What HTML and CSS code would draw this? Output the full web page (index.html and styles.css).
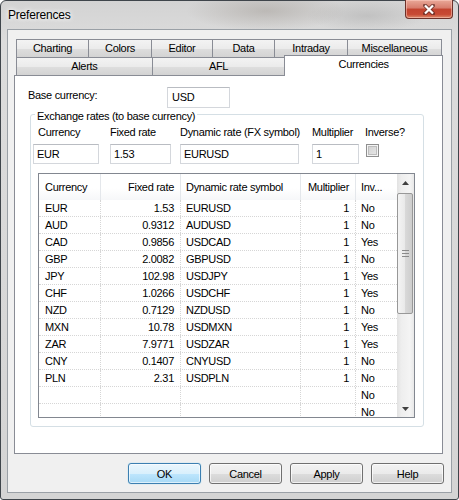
FILE: index.html
```html
<!DOCTYPE html>
<html lang="en">
  <head>
    <meta charset="UTF-8" />
    <title>Preferences</title>
    <link rel="stylesheet" href="styles.css">
  </head>
  <body>
    <div class="window">
      <div class="titlebar">
        <span class="title">Preferences</span>
        <span class="close-button">
          <svg width="12" height="11" viewBox="0 0 12 11">
            <path d="M2 1.5 L10 9.5 M10 1.5 L2 9.5" stroke="#5a2a24" stroke-width="4" stroke-linecap="square" fill="none" opacity="0.7"/>
            <path d="M2 1.5 L10 9.5 M10 1.5 L2 9.5" stroke="#ffffff" stroke-width="2.2" fill="none"/>
          </svg>
        </span>
      </div>

      <div class="client">
        <div class="tabs">
          <div class="tab-row">
            <span class="tab tab-first" style="width: 73px">Charting</span>
            <span class="tab" style="width: 63px">Colors</span>
            <span class="tab" style="width: 61px">Editor</span>
            <span class="tab" style="width: 62px">Data</span>
            <span class="tab" style="width: 73px">Intraday</span>
            <span class="tab" style="width: 94px">Miscellaneous</span>
          </div>
          <div class="tab-row">
            <span class="tab tab-first" style="width: 137px">Alerts</span>
            <span class="tab" style="width: 133px">AFL</span>
            <span class="tab tab-selected">Currencies</span>
          </div>
        </div>

        <div class="page">
          <div class="base-row">
            <span class="base-label">Base currency:</span>
            <span class="text-input base-input">USD</span>
          </div>

          <div class="group">
            <div class="group-title">Exchange rates (to base currency)</div>

            <div class="fields">
              <div class="field">
                <div class="field-label label-currency">Currency</div>
                <span class="text-input" style="width: 66px">EUR</span>
              </div>
              <div class="field">
                <div class="field-label">Fixed rate</div>
                <span class="text-input" style="width: 61px">1.53</span>
              </div>
              <div class="field">
                <div class="field-label">Dynamic rate (FX symbol)</div>
                <span class="text-input" style="width: 119px">EURUSD</span>
              </div>
              <div class="field">
                <div class="field-label">Multiplier</div>
                <span class="text-input" style="width: 47px">1</span>
              </div>
              <div class="field">
                <div class="field-label">Inverse?</div>
                <span class="checkbox"></span>
              </div>
            </div>

            <div class="list">
              <div class="list-grid">
                <div class="list-head">
                  <span class="cell c1">Currency</span>
                  <span class="cell c2">Fixed rate</span>
                  <span class="cell c3">Dynamic rate symbol</span>
                  <span class="cell c4">Multiplier</span>
                  <span class="cell c5">Inv...</span>
                </div>
                <div class="list-row"><span class="cell c1">EUR</span><span class="cell c2">1.53</span><span class="cell c3">EURUSD</span><span class="cell c4">1</span><span class="cell c5">No</span></div>
                <div class="list-row"><span class="cell c1">AUD</span><span class="cell c2">0.9312</span><span class="cell c3">AUDUSD</span><span class="cell c4">1</span><span class="cell c5">No</span></div>
                <div class="list-row"><span class="cell c1">CAD</span><span class="cell c2">0.9856</span><span class="cell c3">USDCAD</span><span class="cell c4">1</span><span class="cell c5">Yes</span></div>
                <div class="list-row"><span class="cell c1">GBP</span><span class="cell c2">2.0082</span><span class="cell c3">GBPUSD</span><span class="cell c4">1</span><span class="cell c5">No</span></div>
                <div class="list-row"><span class="cell c1">JPY</span><span class="cell c2">102.98</span><span class="cell c3">USDJPY</span><span class="cell c4">1</span><span class="cell c5">Yes</span></div>
                <div class="list-row"><span class="cell c1">CHF</span><span class="cell c2">1.0266</span><span class="cell c3">USDCHF</span><span class="cell c4">1</span><span class="cell c5">Yes</span></div>
                <div class="list-row"><span class="cell c1">NZD</span><span class="cell c2">0.7129</span><span class="cell c3">NZDUSD</span><span class="cell c4">1</span><span class="cell c5">No</span></div>
                <div class="list-row"><span class="cell c1">MXN</span><span class="cell c2">10.78</span><span class="cell c3">USDMXN</span><span class="cell c4">1</span><span class="cell c5">Yes</span></div>
                <div class="list-row"><span class="cell c1">ZAR</span><span class="cell c2">7.9771</span><span class="cell c3">USDZAR</span><span class="cell c4">1</span><span class="cell c5">Yes</span></div>
                <div class="list-row"><span class="cell c1">CNY</span><span class="cell c2">0.1407</span><span class="cell c3">CNYUSD</span><span class="cell c4">1</span><span class="cell c5">No</span></div>
                <div class="list-row"><span class="cell c1">PLN</span><span class="cell c2">2.31</span><span class="cell c3">USDPLN</span><span class="cell c4">1</span><span class="cell c5">No</span></div>
                <div class="list-row"><span class="cell c1"></span><span class="cell c2"></span><span class="cell c3"></span><span class="cell c4"></span><span class="cell c5">No</span></div>
                <div class="list-row"><span class="cell c1"></span><span class="cell c2"></span><span class="cell c3"></span><span class="cell c4"></span><span class="cell c5">No</span></div>
              </div>
              <div class="scrollbar">
                <span class="sb-button">
                  <svg width="7" height="4" viewBox="0 0 7 4"><path d="M3.5 0 L7 4 L0 4 Z" fill="#404040"/></svg>
                </span>
                <span class="sb-thumb">
                  <svg width="7" height="7" viewBox="0 0 7 7"><path d="M0 0.5 H7 M0 3.5 H7 M0 6.5 H7" stroke="#8a8a8a" stroke-width="1"/></svg>
                </span>
                <span class="sb-track"></span>
                <span class="sb-button">
                  <svg width="7" height="4" viewBox="0 0 7 4"><path d="M0 0 L7 0 L3.5 4 Z" fill="#404040"/></svg>
                </span>
              </div>
            </div>
          </div>
        </div>

        <div class="buttons">
          <button class="btn btn-default">OK</button>
          <button class="btn">Cancel</button>
          <button class="btn">Apply</button>
          <button class="btn">Help</button>
        </div>
      </div>
    </div>
  </body>
</html>
```

FILE: styles.css
```css
body{
  margin: 0;
  font-family: "Liberation Sans", Arial, sans-serif;
  font-size: 11px;
  letter-spacing: -0.3px;
  color: #000;
  background-color: #fff;
}
.window{
  width: 459px;
  height: 500px;
  box-sizing: border-box;
  border: 1px solid #3f454b;
  border-radius: 6px 6px 3px 3px;
  padding: 0 6px 6px;
  display: flex;
  flex-direction: column;
  background:
    radial-gradient(ellipse 80px 20px at 58% 2%, rgba(130, 120, 110, 0.3), transparent),
    radial-gradient(ellipse 60px 16px at 80% 3%, rgba(130, 130, 130, 0.25), transparent),
    linear-gradient(#d3d3d3, #dcdcdc 40px, #d4d4d4);
}
.titlebar{
  height: 28px;
  display: flex;
  align-items: center;
  justify-content: space-between;
  padding-left: 1px;
}
.title{
  font-size: 12px;
  letter-spacing: -0.2px;
  line-height: 14px;
  text-shadow: 0 0 6px #fff, 0 0 4px #fff;
}
.close-button{
  align-self: flex-start;
  margin-top: -1px;
  margin-right: -1px;
  width: 48px;
  height: 19px;
  box-sizing: border-box;
  border: 1px solid #6d3129;
  border-top: none;
  border-radius: 0 0 4px 4px;
  background: linear-gradient(#e9a898, #d77c6c 45%, #c2432f 50%, #c84a34 80%, #dc8a6a);
  display: flex;
  align-items: center;
  justify-content: center;
  box-shadow: inset 0 0 0 1px rgba(255, 210, 200, 0.5);
}
.client{
  flex: 1;
  border: 1px solid #9aa0a6;
  background-color: #f0f0f0;
  padding: 9px 7px 8px 6px;
  display: flex;
  flex-direction: column;
}
.tabs{
  width: 429px;
}
.tab-row{
  display: flex;
  height: 18px;
  padding-left: 2px;
}
.tab{
  box-sizing: border-box;
  height: 18px;
  border-top: 1px solid #898c95;
  border-right: 1px solid #898c95;
  background: linear-gradient(#f3f3f3, #ebebeb 50%, #dedede 51%, #d3d3d3);
  text-align: center;
  line-height: 17px;
}
.tab-first{
  border-left: 1px solid #898c95;
}
.tab-selected{
  position: relative;
  width: 159px;
  height: 21px;
  margin-top: -2px;
  margin-left: -1px;
  border-left: 1px solid #898c95;
  background: #fff;
  line-height: 17px;
}
.page{
  width: 429px;
  height: 379px;
  box-sizing: border-box;
  border: 1px solid #898c95;
  background-color: #fff;
  padding: 11px 0 0 13px;
}
.base-row{
  display: flex;
}
.base-label{
  width: 139px;
  line-height: 13px;
  margin-top: 2px;
}
.text-input{
  display: block;
  box-sizing: border-box;
  height: 20px;
  border: 1px solid #d4d7dc;
  border-top-color: #b9bcc2;
  padding-left: 3px;
  line-height: 18px;
}
.base-input{
  width: 63px;
  height: 21px;
  padding-left: 4px;
  line-height: 19px;
}
.group{
  margin: 6px 0 0 2px;
  width: 394px;
  height: 313px;
  box-sizing: border-box;
  border: 1px solid #d5dfe5;
  border-radius: 3px;
}
.group-title{
  display: table;
  margin: -5px 0 0 4px;
  padding: 0 2px;
  background-color: #fff;
  line-height: 13px;
}
.fields{
  display: grid;
  grid-template-columns: 77px 70px 132px 53px auto;
  margin-top: 3px;
  padding-left: 2px;
}
.field-label{
  line-height: 13px;
  margin-bottom: 5px;
}
.label-currency{
  padding-left: 5px;
}
.checkbox{
  display: block;
  width: 13px;
  height: 13px;
  box-sizing: border-box;
  margin: 3px 0 0 1px;
  border: 1px solid #8f8f8f;
  background: linear-gradient(135deg, #cfcfcf, #e9e9e9);
  box-shadow: inset 0 0 0 1px #f4f4f4, inset 0 0 0 2px #bdbdbd;
}
.list{
  margin: 9px 0 0 7px;
  width: 377px;
  height: 245px;
  box-sizing: border-box;
  border: 1px solid #828790;
  display: flex;
}
.list-grid{
  width: 358px;
  overflow: hidden;
}
.list-head{
  display: flex;
  height: 26px;
  background: linear-gradient(#ffffff, #ffffff 55%, #f6f7f9);
}
.list-head .cell{
  line-height: 26px;
  border-right: 1px solid #e4e7eb;
}
.list-row{
  display: flex;
  height: 17px;
  box-sizing: border-box;
  border-bottom: 1px dotted #d6d6d6;
}
.cell{
  box-sizing: border-box;
  flex-shrink: 0;
  line-height: 16px;
  white-space: nowrap;
  border-right: 1px dotted #d6d6d6;
}
.c1{
  width: 62px;
  padding-left: 6px;
}
.c2{
  width: 80px;
  padding-right: 6px;
  text-align: right;
}
.c3{
  width: 120px;
  padding-left: 5px;
}
.c4{
  width: 55px;
  padding-right: 6px;
  text-align: right;
}
.c5{
  width: 41px;
  padding-left: 5px;
}
.list-head .c5, .list-row .c5{
  border-right: none;
}
.scrollbar{
  width: 17px;
  display: flex;
  flex-direction: column;
  background: linear-gradient(to right, #e2e2e2, #eeeeee 25%, #f4f4f4 75%, #e8e8e8);
}
.sb-button{
  height: 17px;
  display: flex;
  align-items: center;
  justify-content: center;
  flex-shrink: 0;
}
.sb-thumb{
  margin: 2px 1px 0 0;
  height: 121px;
  box-sizing: border-box;
  border: 1px solid #989898;
  border-radius: 2px;
  background: linear-gradient(to right, #f4f4f4, #e9e9e9 50%, #d9d9d9 51%, #cdcdcd);
  display: flex;
  align-items: center;
  justify-content: center;
}
.sb-track{
  flex: 1;
}
.buttons{
  display: flex;
  justify-content: flex-end;
  gap: 8px;
  margin-top: 9px;
}
.btn{
  width: 73px;
  height: 21px;
  box-sizing: border-box;
  padding: 0;
  border: 1px solid #707070;
  border-radius: 3px;
  background: linear-gradient(#f2f2f2, #ebebeb 50%, #dddddd 51%, #cfcfcf);
  box-shadow: inset 0 0 0 1px rgba(255, 255, 255, 0.7);
  font-family: inherit;
  font-size: 11px;
  letter-spacing: -0.3px;
  color: #000;
}
.btn-default{
  border-color: #3c7fb1;
  background: linear-gradient(#eaf6fd, #d9f0fc 50%, #bee6fd 51%, #a7d9f5);
  box-shadow: inset 0 0 0 1px rgba(255, 255, 255, 0.6), 0 0 1px #6ac8f0;
}
```
